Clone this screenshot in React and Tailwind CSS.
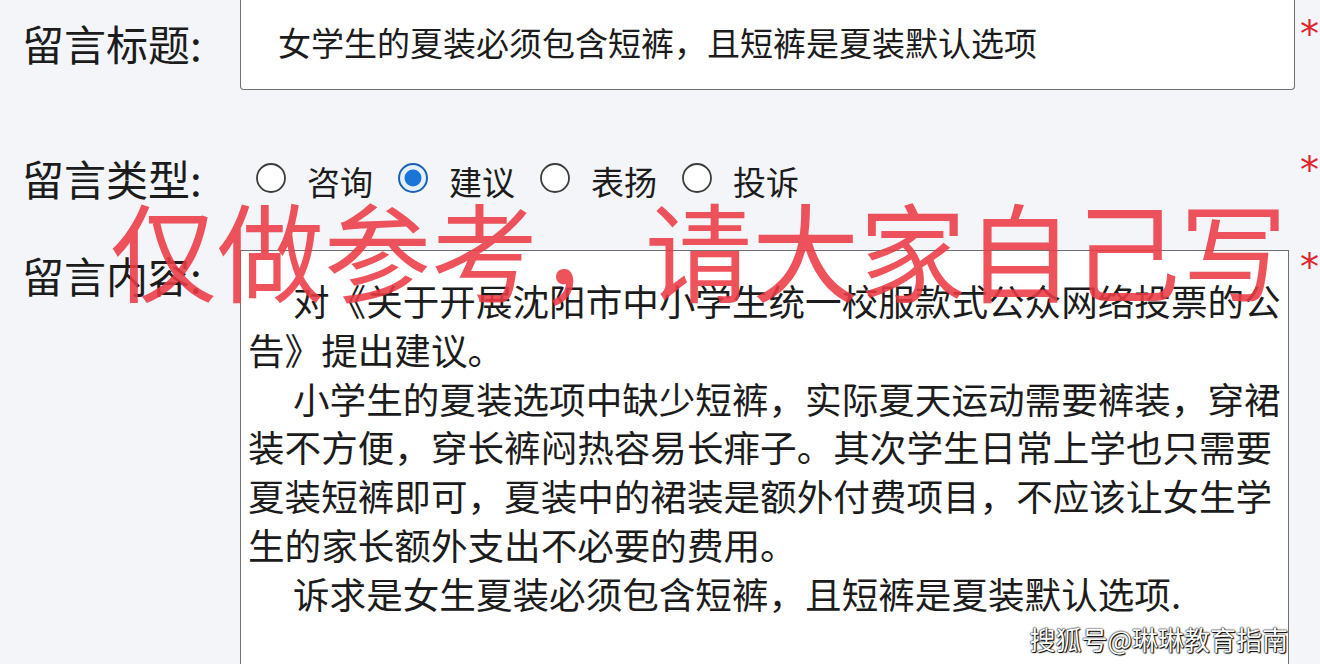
import React from 'react';

const FONT = { fontFamily: '"Noto Sans CJK SC", "Noto Sans", sans-serif' };

function Radio({ checked }) {
  return (
    <svg width="32" height="32" viewBox="0 0 32 32" className="shrink-0">
      {checked ? (
        <>
          <circle cx="16" cy="16" r="14" fill="#e4f0fc" stroke="#1a5fb8" strokeWidth="2" />
          <circle cx="16" cy="16" r="8.5" fill="#1b74d8" />
        </>
      ) : (
        <circle cx="16" cy="16" r="14" fill="#ffffff" stroke="#3c3c3c" strokeWidth="1.8" />
      )}
    </svg>
  );
}

const types = [
  { label: '咨询', checked: false },
  { label: '建议', checked: true },
  { label: '表扬', checked: false },
  { label: '投诉', checked: false },
];

function Star({ className }) {
  return (
    <div className={`w-[25px] pl-[5px] text-[38px] leading-[30px] text-[#e0242a] ${className}`} style={{ fontFamily: '"DejaVu Sans", sans-serif' }}>
      *
    </div>
  );
}

export default function App() {
  return (
    <div className="relative w-[1320px] h-[664px] overflow-hidden bg-[#f3f5f9] text-[#1c1c1c]" style={FONT}>
      {/* title */}
      <div className="flex h-[90px]">
        <div className="w-[240px] pl-[22px] flex items-center pb-[6px] text-[42px]">留言标题:</div>
        <div className="w-[1055px] h-[90px] bg-white border border-t-0 border-[#707070] rounded-b-[4px] pl-[37px] pb-[4px] flex items-center text-[33px]">
          女学生的夏装必须包含短裤，且短裤是夏装默认选项
        </div>
        <Star className="pt-[19px]" />
      </div>

      {/* type */}
      <div className="flex items-center h-[60px] mt-[58px]">
        <div className="w-[240px] pl-[22px] text-[42px] leading-none">留言类型:</div>
        <div className="flex items-center pl-[15px]">
          {types.map((t, i) => (
            <div key={t.label} className={`flex items-center gap-[20px] ${i > 0 ? 'ml-[24px]' : ''}`}>
              <Radio checked={t.checked} />
              <span className="text-[33px] leading-none pt-[6px]">{t.label}</span>
            </div>
          ))}
        </div>
        <div className="flex-1" />
        <Star className="self-start pt-[7px]" />
      </div>

      {/* content */}
      <div className="flex mt-[42px]">
        <div className="w-[240px] pl-[22px] text-[42px] leading-[50px]">留言内容:</div>
        <div className="w-[1049px] h-[430px] bg-white border border-b-0 border-[#707070] pl-[7px] pt-[26px] text-[36.6px] leading-[48.8px] whitespace-nowrap">
          <p className="indent-[45px]">
            对《关于开展沈阳市中小学生统一校服款式公众网络投票的公
            <br />
            告》提出建议。
          </p>
          <p className="indent-[45px]">
            小学生的夏装选项中缺少短裤，实际夏天运动需要裤装，穿裙
            <br />
            装不方便，穿长裤闷热容易长痱子。其次学生日常上学也只需要
            <br />
            夏装短裤即可，夏装中的裙装是额外付费项目，不应该让女生学
            <br />
            生的家长额外支出不必要的费用。
          </p>
          <p className="indent-[45px]">诉求是女生夏装必须包含短裤，且短裤是夏装默认选项.</p>
        </div>
        <div className="flex-1" />
        <Star className="pt-[2px]" />
      </div>

      {/* red watermark over the form */}
      <div className="absolute left-[110px] top-[194px] text-[107px] leading-none font-normal text-[rgba(236,58,68,0.88)] whitespace-nowrap pointer-events-none">
        仅做参考，请大家自己写
      </div>

      {/* sohu watermark */}
      <div className="absolute right-[32px] bottom-[12px] text-[26px] leading-none text-white whitespace-nowrap [text-shadow:0_0_2px_#000,0_0_1px_#000,1px_1px_1px_#000]">
        搜狐号@琳琳教育指南
      </div>
    </div>
  );
}
